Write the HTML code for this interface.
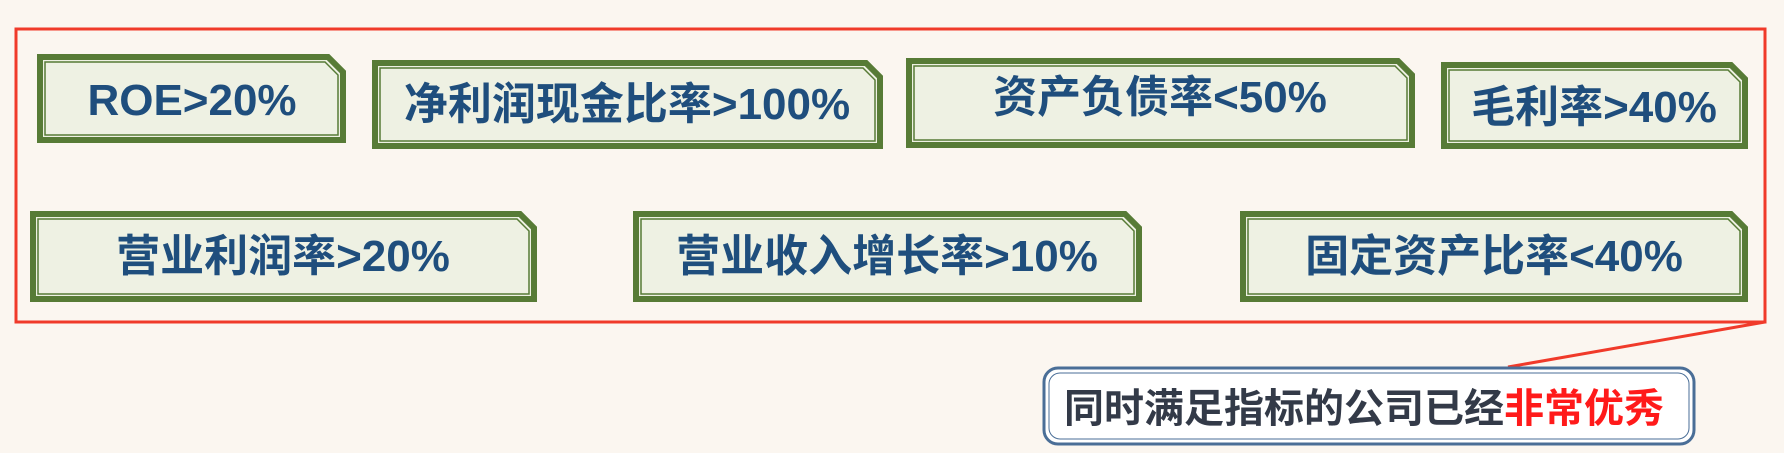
<!DOCTYPE html>
<html><head><meta charset="utf-8"><style>
html,body{margin:0;padding:0;background:#fbf6f0;}
svg{display:block}
text{font-family:"Liberation Sans","Noto Sans CJK SC",sans-serif;font-weight:bold;}
</style></head><body>
<svg width="1784" height="453" viewBox="0 0 1784 453" xmlns="http://www.w3.org/2000/svg">
<rect width="1784" height="453" fill="#fbf6f0"/>
<rect x="16" y="29" width="1749" height="293" fill="none" stroke="#f03a2a" stroke-width="3"/>
<line x1="1508" y1="367" x2="1765" y2="322" stroke="#f03a2a" stroke-width="3"/>
<g fill="#eef1e3">
<polygon points="40,57 328,57 343,72 343,140 40,140" stroke="#577b36" stroke-width="6"/>
<polygon points="45,62 325,62 338,75 338,135 45,135" fill="none" stroke="#577b36" stroke-width="1.5"/>
<polygon points="375,63 866,63 880,77 880,146 375,146" stroke="#577b36" stroke-width="6"/>
<polygon points="380,68 863,68 875,80 875,141 380,141" fill="none" stroke="#577b36" stroke-width="1.5"/>
<polygon points="909,61 1398,61 1412,75 1412,145 909,145" stroke="#577b36" stroke-width="6"/>
<polygon points="914,66 1395,66 1407,78 1407,140 914,140" fill="none" stroke="#577b36" stroke-width="1.5"/>
<polygon points="1444,65 1731,65 1745,79 1745,146 1444,146" stroke="#577b36" stroke-width="6"/>
<polygon points="1449,70 1728,70 1740,82 1740,141 1449,141" fill="none" stroke="#577b36" stroke-width="1.5"/>
<polygon points="33,214 520,214 534,228 534,299 33,299" stroke="#577b36" stroke-width="6"/>
<polygon points="38,219 517,219 529,231 529,294 38,294" fill="none" stroke="#577b36" stroke-width="1.5"/>
<polygon points="636,214 1125,214 1139,228 1139,299 636,299" stroke="#577b36" stroke-width="6"/>
<polygon points="641,219 1122,219 1134,231 1134,294 641,294" fill="none" stroke="#577b36" stroke-width="1.5"/>
<polygon points="1243,214 1731,214 1745,228 1745,299 1243,299" stroke="#577b36" stroke-width="6"/>
<polygon points="1248,219 1728,219 1740,231 1740,294 1248,294" fill="none" stroke="#577b36" stroke-width="1.5"/>
</g>
<g fill="#1f4e7d" font-size="44" text-anchor="middle">
<text x="192" y="115">ROE&gt;20%</text>
<text x="627" y="119">净利润现金比率&gt;100%</text>
<text x="1160" y="112">资产负债率&lt;50%</text>
<text x="1594" y="122">毛利率&gt;40%</text>
<text x="283" y="271">营业利润率&gt;20%</text>
<text x="887" y="271">营业收入增长率&gt;10%</text>
<text x="1494" y="271">固定资产比率&lt;40%</text>
</g>
<rect x="1044" y="368" width="650" height="76" rx="14" fill="#fff" stroke="#4a6e97" stroke-width="3"/>
<rect x="1049" y="373" width="640" height="66" rx="11" fill="none" stroke="#4a6e97" stroke-width="1"/>
<text x="1064" y="422" font-size="40" fill="#333a48">同时满足指标的公司已经<tspan fill="#ff1a1a">非常优秀</tspan></text>
</svg>
</body></html>
